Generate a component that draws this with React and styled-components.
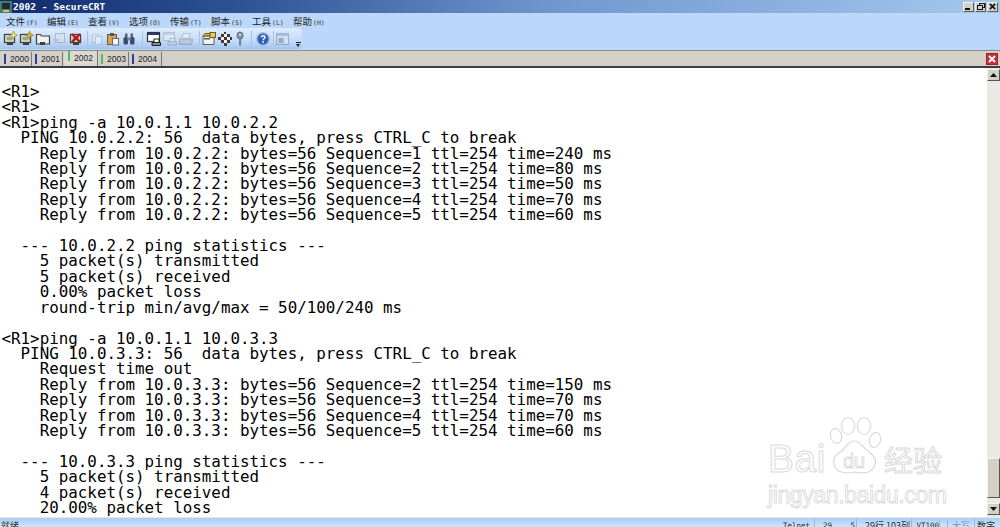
import React from 'react';
import styled, { createGlobalStyle } from 'styled-components';

const GlobalStyle = createGlobalStyle`
  html, body {
    margin: 0;
    padding: 0;
    background: #fff;
    overflow: hidden;
  }
`;

const Win = styled.div`
  position: relative;
  width: 1000px;
  height: 527px;
  display: flex;
  flex-direction: column;
  overflow: hidden;
`;

const TitleBar = styled.div`
  height: 13px;
  flex: none;
  display: flex;
  align-items: center;
  gap: 1px;
  padding: 0 2px 0 0;
  background: linear-gradient(90deg, #0f2a6e 0%, #2f5596 25%, #6f97cf 55%, #a6c8ee 100%);
`;

const TitleText = styled.span`
  font: bold 9.5px/13px "DejaVu Sans Mono", monospace;
  color: #fff;
  letter-spacing: 0.05px;
  flex: 1;
`;

const WinButtons = styled.div`
  display: flex;
  gap: 1px;
`;

const WinButton = styled.div`
  width: 11px;
  height: 10px;
  background: #d4d0c8;
  border: 1px solid;
  border-color: #f4f2ee #5a5a5a #5a5a5a #f4f2ee;
  box-sizing: border-box;
  display: flex;
  align-items: center;
  justify-content: center;
`;

const MenuBar = styled.div`
  height: 15px;
  flex: none;
  display: flex;
  padding-left: 6px;
  background: #bbd8fb;
`;

const MenuItem = styled.div`
  width: 41px;
  font: 9.5px/17px "Noto Sans CJK SC", sans-serif;
  color: #222;
  white-space: nowrap;
  small {
    font: 6.5px/17px "DejaVu Sans Mono", monospace;
    color: #333;
    margin-left: 1px;
  }
`;

const ToolRow = styled.div`
  height: 22px;
  flex: none;
  background: #bbd8fb;
`;

const Toolbar = styled.div`
  width: 302px;
  height: 21px;
  box-sizing: border-box;
  display: flex;
  align-items: center;
  padding-left: 2px;
  border-radius: 0 3px 3px 0;
  background: linear-gradient(180deg, #dfecfd 0%, #c3dbf8 60%, #a4c4ee 100%);
`;

const ToolIcon = styled.div`
  width: 16px;
  height: 16px;
  flex: none;
  margin-right: ${p => p.$gap || 0}px;
  opacity: ${p => (p.$faded ? 0.45 : 1)};
`;

const ToolSep = styled.div`
  width: 1px;
  height: 15px;
  flex: none;
  background: #a6c0e2;
  margin: 0 ${p => p.$r}px 0 ${p => p.$l}px;
`;

const DropMark = styled.div`
  margin: 9px 0 0 5px;
  width: 5px;
  height: 3px;
  background: linear-gradient(180deg, #222 0 1px, transparent 1px);
  position: relative;
  &::after {
    content: '';
    position: absolute;
    left: 0;
    top: 2px;
    border: 2.5px solid transparent;
    border-top: 3px solid #222;
    border-bottom: 0;
  }
`;

const TabStrip = styled.div`
  height: 15px;
  flex: none;
  display: flex;
  align-items: flex-end;
  padding: 0 2px;
  background: #d4d0c8;
  border-top: 1px solid #8d8c88;
  border-bottom: 2px solid #3d3d3d;
  position: relative;
`;

const Tab = styled.div`
  height: ${p => (p.$active ? 15 : 14)}px;
  width: ${p => p.$w}px;
  margin-right: 1px;
  box-sizing: border-box;
  display: flex;
  align-items: ${p => (p.$active ? 'flex-start' : 'center')};
  gap: 4px;
  padding-left: ${p => (p.$active ? 4 : 2)}px;
  font: 8.5px/14px "Liberation Sans", sans-serif;
  color: #222;
  border-right: 1px solid #777;
  background: ${p => (p.$active ? '#dcd9d1' : '#d4d0c8')};
  i {
    display: block;
    width: 2px;
    height: 10px;
    flex: none;
    background: ${p => p.$mark};
  }
`;

const CloseTab = styled.div`
  position: absolute;
  right: 2px;
  top: 2px;
  width: 12px;
  height: 12px;
  box-sizing: border-box;
  background: #c8313c;
  border: 1px solid #8c2a30;
  display: flex;
  align-items: center;
  justify-content: center;
`;

const Body = styled.div`
  flex: 1;
  min-height: 0;
  display: flex;
  background: #fff;
`;

const Terminal = styled.pre`
  flex: 1;
  margin: 0;
  padding: 16px 0 0 1.5px;
  overflow: hidden;
  font: 15.85px/15.4px "DejaVu Sans Mono", monospace;
  color: #000;
`;

const ScrollBar = styled.div`
  width: 13px;
  flex: none;
  display: flex;
  flex-direction: column;
  background: #ebe9e3;
`;

const ScrollBtn = styled.div`
  height: 12px;
  flex: none;
  box-sizing: border-box;
  background: #d4d0c8;
  border: 1px solid;
  border-color: #f4f2ee #555 #555 #f4f2ee;
  display: flex;
  align-items: center;
  justify-content: center;
  margin: ${p => p.$margin};
`;

const ScrollTrack = styled.div`
  flex: 1;
  display: flex;
  flex-direction: column;
  justify-content: flex-end;
  padding-bottom: 5px;
`;

const ScrollThumb = styled.div`
  height: 40px;
  box-sizing: border-box;
  background: #d4d0c8;
  border: 1px solid;
  border-color: #f4f2ee #555 #555 #f4f2ee;
`;

const StatusBar = styled.div`
  height: 10px;
  flex: none;
  box-sizing: border-box;
  display: flex;
  justify-content: space-between;
  overflow: hidden;
  border-top: 1px solid #e6e6e6;
  background: linear-gradient(180deg, #a9cff6 0%, #cfe3fb 100%);
  font: 9px/14px "Noto Sans CJK SC", sans-serif;
  color: #333;
`;

const StatusLeft = styled.div`
  padding-left: 1px;
  margin-top: 1px;
`;

const StatusCells = styled.div`
  display: flex;
`;

const StatusCell = styled.div`
  width: ${p => p.$w}px;
  padding-right: ${p => p.$pad}px;
  box-sizing: border-box;
  text-align: right;
  white-space: nowrap;
  margin-top: 1px;
  border-right: 1px solid ${p => (p.$open ? 'transparent' : '#9ab8dc')};
  color: ${p => (p.$off ? '#8a93a3' : '#333')};
  font-family: ${p => (p.$mono ? '"DejaVu Sans Mono", monospace' : 'inherit')};
  font-size: ${p => (p.$mono ? '7.5px' : '9px')};
`;

/* watermark lies over the terminal */
const Mark = styled.div`
  position: absolute;
  left: 768px;
  top: 419px;
  width: 184px;
  pointer-events: none;
  color: transparent;
  -webkit-text-stroke: 1px #dadada;
`;

const MarkRow = styled.div`
  display: flex;
  align-items: flex-end;
  height: 58px;
`;

const MarkLatin = styled.span`
  font: 39px/36px "Liberation Sans", sans-serif;
  letter-spacing: 0.5px;
`;

const MarkCjk = styled.span`
  font: 29px/36px "Noto Sans CJK SC", sans-serif;
  margin-left: 1px;
  white-space: nowrap;
`;

const MarkDomain = styled.div`
  font: 23px/30px "Liberation Sans", sans-serif;
  letter-spacing: -0.4px;
  white-space: nowrap;
  margin-top: 3px;
  -webkit-text-stroke-width: 0.9px;
`;

const Paw = styled.svg`
  width: 56px;
  height: 60px;
  flex: none;
  margin-left: 1px;
  overflow: visible;
`;

const lines = [
  '<R1>',
  '<R1>',
  '<R1>ping -a 10.0.1.1 10.0.2.2',
  '  PING 10.0.2.2: 56  data bytes, press CTRL_C to break',
  '    Reply from 10.0.2.2: bytes=56 Sequence=1 ttl=254 time=240 ms',
  '    Reply from 10.0.2.2: bytes=56 Sequence=2 ttl=254 time=80 ms',
  '    Reply from 10.0.2.2: bytes=56 Sequence=3 ttl=254 time=50 ms',
  '    Reply from 10.0.2.2: bytes=56 Sequence=4 ttl=254 time=70 ms',
  '    Reply from 10.0.2.2: bytes=56 Sequence=5 ttl=254 time=60 ms',
  '',
  '  --- 10.0.2.2 ping statistics ---',
  '    5 packet(s) transmitted',
  '    5 packet(s) received',
  '    0.00% packet loss',
  '    round-trip min/avg/max = 50/100/240 ms',
  '',
  '<R1>ping -a 10.0.1.1 10.0.3.3',
  '  PING 10.0.3.3: 56  data bytes, press CTRL_C to break',
  '    Request time out',
  '    Reply from 10.0.3.3: bytes=56 Sequence=2 ttl=254 time=150 ms',
  '    Reply from 10.0.3.3: bytes=56 Sequence=3 ttl=254 time=70 ms',
  '    Reply from 10.0.3.3: bytes=56 Sequence=4 ttl=254 time=70 ms',
  '    Reply from 10.0.3.3: bytes=56 Sequence=5 ttl=254 time=60 ms',
  '',
  '  --- 10.0.3.3 ping statistics ---',
  '    5 packet(s) transmitted',
  '    4 packet(s) received',
  '    20.00% packet loss',
].join('\n');

const menus = [
  ['文件', 'F'], ['编辑', 'E'], ['查看', 'V'], ['选项', 'O'],
  ['传输', 'T'], ['脚本', 'S'], ['工具', 'L'], ['帮助', 'H'],
];

const tabs = [
  { name: '2000', mark: '#2a3f9c', w: 30 },
  { name: '2001', mark: '#2a3f9c', w: 30 },
  { name: '2002', mark: '#58b85c', w: 34, active: true },
  { name: '2003', mark: '#58b85c', w: 30 },
  { name: '2004', mark: '#2a3f9c', w: 32 },
];

const Svg = ({ children }) => (
  <svg width="16" height="16" viewBox="0 0 16 16">{children}</svg>
);

const Monitor = ({ flash, x }) => (
  <Svg>
    <rect x="2.5" y="3.5" width="10" height="8" fill="#e8ead8" stroke="#3c4038" strokeWidth="1.3" />
    <rect x="4.5" y="5.5" width="6" height="4" fill="#9aa690" />
    <rect x="5" y="12" width="6" height="2" fill="#3c4038" />
    {flash && <path d="M11.5 0l1.2 3 3 1.2-3 1.2-1.2 3-1.2-3-3-1.2 3-1.2z" fill={flash} stroke="#6a6430" strokeWidth="0.5" />}
    {x && <path d="M4 3l8 8M12 3l-8 8" stroke="#b41818" strokeWidth="2.4" />}
  </Svg>
);

const icons = {
  connect: <Monitor flash="#f4ea80" />,
  quick: <Monitor flash="#dcb428" />,
  tab: (
    <Svg>
      <path d="M1.5 3.5h4l1 1.5h8v8h-13z" fill="#eef2f4" stroke="#3c4038" strokeWidth="1.2" />
      <rect x="5" y="11" width="5" height="3" fill="#3c4038" />
    </Svg>
  ),
  reconnect: (
    <Svg>
      <rect x="4.5" y="2.5" width="9" height="9" fill="#dde6ee" stroke="#7a8794" />
      <path d="M2 9l3-3v2h3v2H5v2z" fill="#8fa2b0" />
    </Svg>
  ),
  disconnect: <Monitor x />,
  copy: (
    <Svg>
      <rect x="3.5" y="3.5" width="6" height="8" fill="#eef1f6" stroke="#9eabba" />
      <rect x="6.5" y="5.5" width="6" height="8" fill="#fff" stroke="#9eabba" />
    </Svg>
  ),
  paste: (
    <Svg>
      <rect x="2.5" y="3.5" width="9" height="10" fill="#d4a64a" stroke="#6e5a30" />
      <rect x="5" y="2" width="4" height="3" fill="#555" />
      <rect x="7.5" y="7.5" width="6" height="6.5" fill="#f8f8f2" stroke="#667" />
    </Svg>
  ),
  find: (
    <Svg>
      <rect x="2.5" y="6" width="4.5" height="7.5" rx="1.5" fill="#3c4a6a" />
      <rect x="9" y="6" width="4.5" height="7.5" rx="1.5" fill="#3c4a6a" />
      <rect x="4" y="2.5" width="2.5" height="4" fill="#56637f" />
      <rect x="9.5" y="2.5" width="2.5" height="4" fill="#56637f" />
      <rect x="6.5" y="6.5" width="3" height="3" fill="#7a869e" />
    </Svg>
  ),
  printPreview: (
    <Svg>
      <rect x="1.5" y="1.5" width="12" height="9" fill="#fff" stroke="#333" strokeWidth="1.2" />
      <rect x="2" y="2" width="11" height="2" fill="#26358a" />
      <path d="M6 11.5h8.5v3H6z" fill="#8a8a8a" stroke="#222" />
      <rect x="8" y="8" width="5" height="3.5" fill="#fff" stroke="#222" />
    </Svg>
  ),
  printSetup: (
    <Svg>
      <rect x="1.5" y="1.5" width="11" height="8" fill="#eef2f6" stroke="#8e9aa6" />
      <rect x="2" y="2" width="10" height="2" fill="#a9b8d0" />
      <path d="M6 10.5h8.5v3.5H6z" fill="#b8c0c8" stroke="#7c8894" />
      <rect x="8" y="7.5" width="5" height="3" fill="#fff" stroke="#7c8894" />
    </Svg>
  ),
  print: (
    <Svg>
      <path d="M5 2.5h7l-1 5H4z" fill="#f4f6f8" stroke="#8994a0" />
      <path d="M1.5 8h13l-1 5.5h-12z" fill="#aab2bc" stroke="#6c7682" />
    </Svg>
  ),
  options: (
    <Svg>
      <path d="M2 5h11v8.5H2z" fill="#f5f2e6" stroke="#5c5c52" />
      <path d="M2 5l2-2.5h5L10 5z" fill="#e0b840" stroke="#6e5a20" />
      <rect x="9" y="1.5" width="5.5" height="5" fill="#e8c860" stroke="#6e5a20" />
      <rect x="3" y="7" width="6" height="1.5" fill="#3a5aa8" />
    </Svg>
  ),
  keymap: (
    <Svg>
      <g fill="#3a3a3a">
        <rect x="1" y="6" width="3" height="3" /><rect x="4" y="3" width="3" height="3" />
        <rect x="7" y="6" width="3" height="3" /><rect x="10" y="3" width="3" height="3" />
        <rect x="4" y="9" width="3" height="3" /><rect x="10" y="9" width="3" height="3" />
        <rect x="7" y="12" width="3" height="3" /><rect x="7" y="1" width="2" height="2" />
        <rect x="13" y="6" width="2" height="3" />
      </g>
      <g fill="#f2efe4">
        <rect x="4" y="6" width="3" height="3" /><rect x="7" y="3" width="3" height="3" />
        <rect x="10" y="6" width="3" height="3" /><rect x="7" y="9" width="3" height="3" />
      </g>
    </Svg>
  ),
  key: (
    <Svg>
      <ellipse cx="8" cy="4.5" rx="3" ry="3.5" fill="#8397ac" stroke="#56687c" />
      <circle cx="8" cy="3.5" r="1" fill="#dfe7f0" />
      <path d="M7 8h2.2v6l-1 1.2L7 14z" fill="#70859a" />
    </Svg>
  ),
  help: (
    <Svg>
      <circle cx="8" cy="8" r="6.2" fill="#2d5fb8" stroke="#a8bcdc" strokeWidth="1.4" />
      <path d="M6.2 6.3c.3-2 3.8-2 3.8 0 0 1.3-1.7 1.3-1.8 3" fill="none" stroke="#fff" strokeWidth="1.4" />
      <rect x="7.4" y="10.2" width="1.6" height="1.6" fill="#fff" />
    </Svg>
  ),
  bars: (
    <Svg>
      <rect x="1.5" y="2.5" width="12" height="11" fill="#d4dce4" stroke="#66727e" />
      <rect x="2" y="3" width="11" height="2" fill="#7f90a4" />
      <rect x="3.5" y="7" width="5" height="5" fill="#66727e" />
      <path d="M9 12l4-4v4z" fill="#f6f8fa" />
    </Svg>
  ),
};

const Tools = () => (
  <Toolbar>
    <ToolIcon>{icons.connect}</ToolIcon>
    <ToolIcon $gap={1}>{icons.quick}</ToolIcon>
    <ToolIcon>{icons.tab}</ToolIcon>
    <ToolIcon $faded $gap={1}>{icons.reconnect}</ToolIcon>
    <ToolIcon>{icons.disconnect}</ToolIcon>
    <ToolSep $l={3} $r={1} />
    <ToolIcon $faded>{icons.copy}</ToolIcon>
    <ToolIcon>{icons.paste}</ToolIcon>
    <ToolIcon>{icons.find}</ToolIcon>
    <ToolSep $l={5} $r={3} />
    <ToolIcon>{icons.printPreview}</ToolIcon>
    <ToolIcon $faded>{icons.printSetup}</ToolIcon>
    <ToolIcon $faded>{icons.print}</ToolIcon>
    <ToolSep $l={5} $r={1} />
    <ToolIcon>{icons.options}</ToolIcon>
    <ToolIcon $gap={-1}>{icons.keymap}</ToolIcon>
    <ToolIcon>{icons.key}</ToolIcon>
    <ToolSep $l={3} $r={3} />
    <ToolIcon>{icons.help}</ToolIcon>
    <ToolSep $l={2} $r={1} />
    <ToolIcon $faded>{icons.bars}</ToolIcon>
    <DropMark />
  </Toolbar>
);

const Cross = ({ color, size }) => (
  <svg width={size} height={size} viewBox="0 0 8 8">
    <path d="M1 1l6 6M7 1l-6 6" stroke={color} strokeWidth="1.8" />
  </svg>
);

const Watermark = () => (
  <Mark>
    <MarkRow>
      <MarkLatin>Bai</MarkLatin>
      <Paw viewBox="0 0 56 60">
        <g fill="none" stroke="#dadada" strokeWidth="1.2">
          <ellipse cx="9" cy="19" rx="5.5" ry="7.5" transform="rotate(-15 9 19)" />
          <ellipse cx="21" cy="9" rx="6.5" ry="8.5" />
          <ellipse cx="37" cy="9" rx="6.5" ry="8.5" />
          <ellipse cx="48" cy="23" rx="5.5" ry="7.5" transform="rotate(15 48 23)" />
          <path d="M27 24c7 0 9 7 15 11 7 5 8 10 5 15-3 6-10 7-19 5-8 2-17 1-20-5-3-6-1-11 5-15 6-3 7-11 14-11z" />
        </g>
        <text x="27" y="51" textAnchor="middle" fontFamily="Liberation Sans, sans-serif" fontSize="20" fill="none" stroke="#dadada" strokeWidth="0.9">du</text>
      </Paw>
      <MarkCjk>经验</MarkCjk>
    </MarkRow>
    <MarkDomain>jingyan.baidu.com</MarkDomain>
  </Mark>
);

export default function App() {
  return (
    <Win>
      <GlobalStyle />
      <TitleBar>
        <svg width="12" height="12" viewBox="0 0 12 12">
          <rect width="12" height="12" fill="#4a7a6a" />
          <rect x="2" y="2" width="8" height="6" fill="#1c2c3c" />
          <rect x="3" y="9" width="6" height="2" fill="#e0c060" />
        </svg>
        <TitleText>2002 - SecureCRT</TitleText>
        <WinButtons>
          <WinButton>
            <svg width="7" height="6" viewBox="0 0 7 6"><rect x="0" y="4" width="5" height="2" fill="#111" /></svg>
          </WinButton>
          <WinButton>
            <svg width="8" height="7" viewBox="0 0 8 7" fill="none" stroke="#111">
              <rect x="2.5" y="0.5" width="5" height="4" />
              <rect x="0.5" y="2.5" width="5" height="4" fill="#d4d0c8" />
            </svg>
          </WinButton>
          <WinButton><Cross color="#111" size={7} /></WinButton>
        </WinButtons>
      </TitleBar>

      <MenuBar>
        {menus.map(([label, key]) => (
          <MenuItem key={key}>{label}<small>({key})</small></MenuItem>
        ))}
      </MenuBar>

      <ToolRow><Tools /></ToolRow>

      <TabStrip>
        {tabs.map(t => (
          <Tab key={t.name} $active={t.active} $mark={t.mark} $w={t.w}>
            <i />{t.name}
          </Tab>
        ))}
        <CloseTab><Cross color="#fff" size={8} /></CloseTab>
      </TabStrip>

      <Body>
        <Terminal>{lines}</Terminal>
        <ScrollBar>
          <ScrollBtn $margin="1px 0 0">
            <svg width="7" height="4" viewBox="0 0 7 4"><path d="M3.5 0L7 4H0z" fill="#111" /></svg>
          </ScrollBtn>
          <ScrollTrack><ScrollThumb /></ScrollTrack>
          <ScrollBtn $margin="0 0 2px">
            <svg width="7" height="4" viewBox="0 0 7 4"><path d="M0 0h7L3.5 4z" fill="#111" /></svg>
          </ScrollBtn>
        </ScrollBar>
      </Body>

      <StatusBar>
        <StatusLeft>就绪</StatusLeft>
        <StatusCells>
          <StatusCell $w={36} $pad={4} $mono>Telnet</StatusCell>
          <StatusCell $w={27} $pad={9} $mono $open>29</StatusCell>
          <StatusCell $w={15} $pad={1} $mono>5</StatusCell>
          <StatusCell $w={55} $pad={1}>29行 103列</StatusCell>
          <StatusCell $w={28} $pad={0} $mono>VT100</StatusCell>
          <StatusCell $w={8} $pad={0} />
          <StatusCell $w={27} $pad={4} $off>大写</StatusCell>
          <StatusCell $w={25} $pad={4} $open>数字</StatusCell>
        </StatusCells>
      </StatusBar>

      <Watermark />
    </Win>
  );
}
